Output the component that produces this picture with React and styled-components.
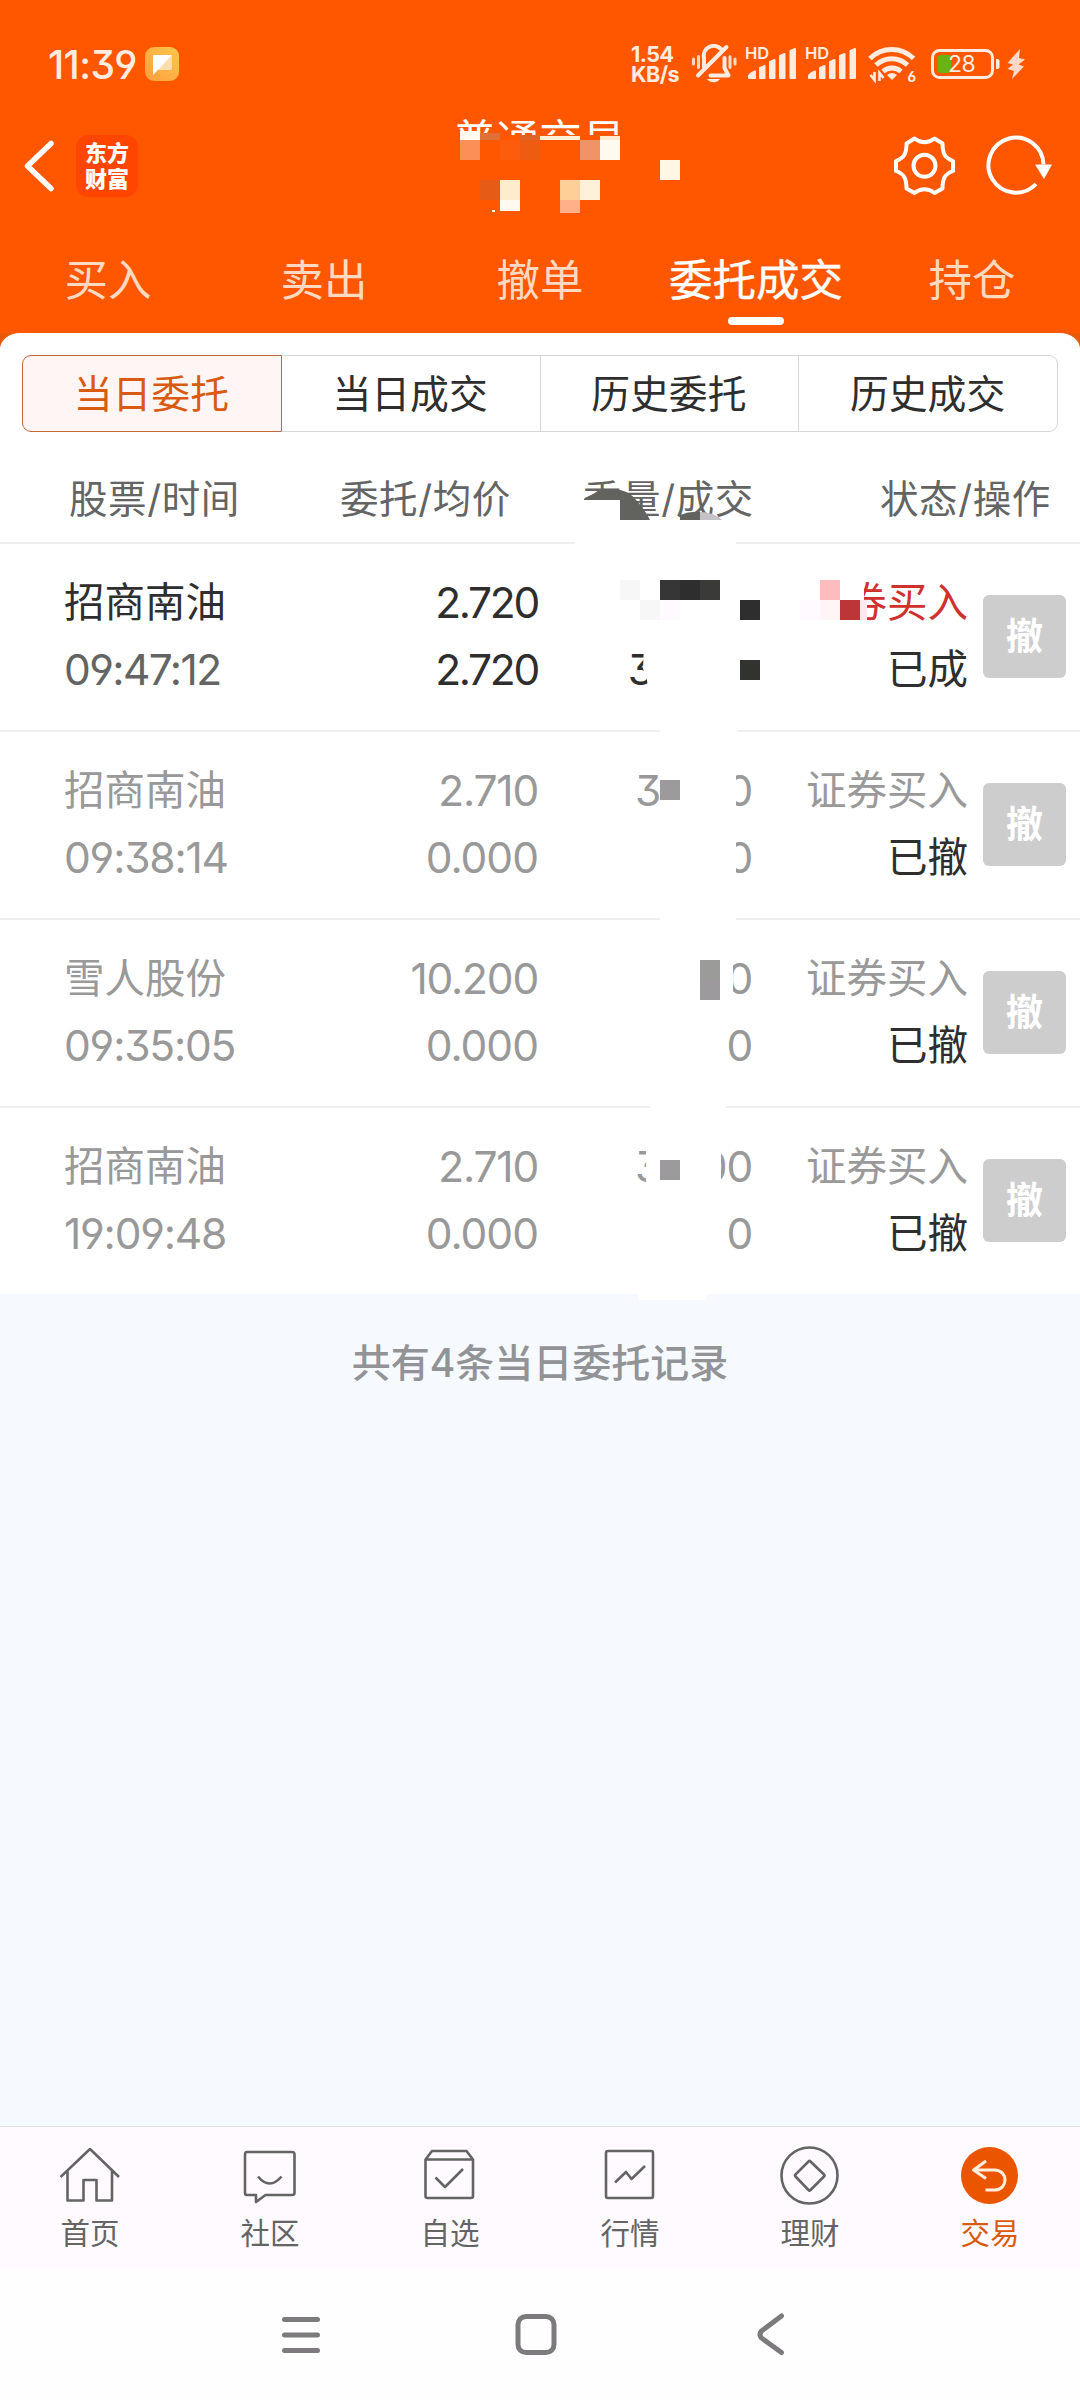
import React from 'react'
import styled, { createGlobalStyle } from 'styled-components'

const tabs = ['买入', '卖出', '撤单', '委托成交', '持仓']
const segments = ['当日委托', '当日成交', '历史委托', '历史成交']

const orders = [
    { name: '招商南油', time: '09:47:12', price: '2.720', avg: '2.720', qty: [], done: ['3'], doneRight: 99, side: '证券买入', status: '已成', filled: true },
    { name: '招商南油', time: '09:38:14', price: '2.710', avg: '0.000', qty: ['3', '0'], done: ['0'], side: '证券买入', status: '已撤' },
    { name: '雪人股份', time: '09:35:05', price: '10.200', avg: '0.000', qty: ['0'], done: ['0'], side: '证券买入', status: '已撤' },
    { name: '招商南油', time: '19:09:48', price: '2.710', avg: '0.000', qty: ['3', '00'], done: ['0'], side: '证券买入', status: '已撤' },
]

// mosaic over the account name: x, y, width, height, colour
const titleMosaic = [
    [450, 135, 180, 40, '#ff5700'],
    [460, 131, 20, 9, '#fffaf0'],
    [480, 133, 20, 7, '#e07038'],
    [520, 135, 20, 5, '#dd6424'],
    [540, 136, 40, 4, '#fff0d8'],
    [600, 136, 20, 4, '#fdebd0'],
    [460, 140, 20, 20, '#fa8f57'],
    [500, 140, 20, 20, '#fc5c0c'],
    [520, 140, 20, 20, '#ee5c12'],
    [580, 140, 20, 20, '#f09468'],
    [600, 140, 20, 20, '#fffaf0'],
    [660, 160, 20, 20, '#fff6e4'],
    [480, 180, 20, 20, '#e65c16'],
    [500, 180, 20, 20, '#ffeccc'],
    [500, 200, 20, 11, '#fffaf0'],
    [560, 180, 20, 20, '#ffcf98'],
    [580, 180, 20, 20, '#fff0da'],
    [560, 200, 20, 13, '#ffb088'],
    [492, 210, 3, 2, '#fffaf0'],
]

// mosaic over the quantities, origin at the top of the column heads
const listMosaic = [
    [575, 86, 161, 6, '#fff'],
    [660, 274, 77, 6, '#fff'],
    [660, 462, 76, 6, '#fff'],
    [650, 650, 76, 6, '#fff'],
    [724, 300, 12, 130, '#fff'],
    [724, 500, 9, 44, '#fff'],
    [646, 680, 20, 50, '#fff'],
    [690, 680, 31, 50, '#fff'],
    [800, 120, 64, 50, '#fff'],
    [620, 126, 20, 20, '#f7f7f7'],
    [640, 146, 20, 20, '#f7f7f7'],
    [660, 126, 20, 20, '#363636'],
    [680, 126, 20, 20, '#2e2e2e'],
    [700, 126, 20, 20, '#3a3b38'],
    [660, 146, 20, 20, '#fefaff'],
    [740, 146, 20, 20, '#2e2e2e'],
    [740, 206, 20, 20, '#31332f'],
    [820, 126, 20, 20, '#ffbcbe'],
    [800, 146, 20, 20, '#fefaff'],
    [820, 146, 20, 20, '#fff5f7'],
    [840, 146, 20, 20, '#bc3638'],
    [860, 146, 7, 20, '#ffe8ee'],
    [660, 326, 20, 20, '#9c9a9d'],
    [700, 506, 20, 20, '#9b9c9a'],
    [700, 526, 20, 20, '#9c9a9d'],
    [660, 706, 20, 20, '#9c9a9d'],
]

function StatusBar() {
    return (
        <Status>
            <Clock>11:39</Clock>
            <svg width="34" height="34" viewBox="0 0 34 34">
                <defs>
                    <linearGradient id="note" x1="0" y1="1" x2="1" y2="0">
                        <stop offset="0" stopColor="#ff9c40" />
                        <stop offset="1" stopColor="#ffc84a" />
                    </linearGradient>
                </defs>
                <rect width="34" height="34" rx="9" fill="url(#note)" />
                <path d="M8 8h17a2 2 0 0 1 2 2v11a2 2 0 0 1-2 2H12l-4 4z" fill="#ffdcae" />
                <path d="M9 8h18L8 28V9z" fill="#fff" />
            </svg>
            <Speed>{'1.54\nKB/s'}</Speed>
            <BellIcon />
            <Signal />
            <Signal />
            <WifiIcon />
            <Battery />
        </Status>
    )
}

function BellIcon() {
    return (
        <Glyph width="46" height="40" viewBox="690 45 46 40" $left={11}>
            <g fill="none" stroke="#ffece0" strokeWidth="4" strokeLinecap="round" strokeLinejoin="round">
                <path d="M703 68V59a10 10 0 0 1 17-9" />
                <path d="M723.500 59v10l4 7.500h-18" />
                <path d="M697 76.500L725.500 48" />
            </g>
            <g stroke="#ffd9c2" strokeWidth="3" strokeLinecap="round">
                <path d="M692.500 60v5M697.500 57.500v11M729 57.500v11M734 60v5" />
            </g>
            <path d="M706 80h13a7 5 0 0 1-13 0z" fill="#ffece0" />
        </Glyph>
    )
}

function Signal() {
    return (
        <SignalBox>
            <Hd>HD</Hd>
            <svg width="52" height="40" viewBox="746 45 52 40">
                <path
                    d="M750 79v-2.500q2-3 6-4V79zM761 79V69l4.500-2V79zM771 79V63l4.500-2V79zM781 79V57l4.500-2V79zM791.500 79V52l4.500-2V79z"
                    fill="#ffece0"
                    stroke="#ffece0"
                    strokeWidth="2"
                    strokeLinejoin="round"
                />
            </svg>
        </SignalBox>
    )
}

function WifiIcon() {
    return (
        <WifiBox>
            <svg width="50" height="40" viewBox="868 45 50 40">
                <g fill="none" stroke="#ffece0" strokeWidth="5">
                    <path d="M871 59.500a31 31 0 0 1 43.500 0" />
                    <path d="M877 66a23 23 0 0 1 31.500 0" />
                    <path d="M884 72.500a13.500 13.500 0 0 1 18 0" />
                </g>
                <path d="M888 76q5-4 10 0l-5 5z" fill="#ffece0" />
                <g fill="none" stroke="#ffece0" strokeWidth="2.600">
                    <path d="M875.500 73v8l-4-5M880.500 82v-8l4 5" />
                </g>
            </svg>
            <Six>6</Six>
        </WifiBox>
    )
}

function Battery() {
    return (
        <BatteryBox>
            <svg width="96" height="40" viewBox="930 44 96 40">
                <rect x="932.500" y="50.500" width="60" height="27" rx="7" fill="none" stroke="#ffece0" strokeWidth="3" />
                <rect x="938" y="55" width="13" height="18" rx="3" fill="#66b512" />
                <path d="M996 59h1.500q2 0 2 2v6q0 2-2 2H996z" fill="#ffece0" />
                <path d="M1020 49L1007.500 63L1013 64.500L1007.500 69L1014 71L1012 79L1024 66.500L1018.500 64.500L1025 59.500L1019 58Z" fill="#ffd9c8" />
            </svg>
            <Percent>28</Percent>
        </BatteryBox>
    )
}

function TitleBar() {
    return (
        <TitleRow>
            <svg width="30" height="52" viewBox="0 0 30 52">
                <path d="M27 3.500L3.500 26L27 48.500" fill="none" stroke="#fff" strokeWidth="5.500" strokeLinecap="round" strokeLinejoin="round" />
            </svg>
            <Brand>
                <span>东方</span>
                <span>财富</span>
            </Brand>
            <Title>普通交易</Title>
            <svg width="64" height="62" viewBox="892 134 64 62">
                <g fill="none" stroke="#fff" strokeWidth="4" strokeLinejoin="round">
                    <path d="M914.500 137.500Q924.500 145 934.500 137.500L942.500 142.500C942.500 153 945 157 953 160V170C945 173 942.500 177 942.500 187.500L934.500 192Q924.500 184.500 914.500 192L906.500 187.500C906.500 177 904 173 896 170V160C904 157 906.500 153 906.500 142.500Z" />
                    <circle cx="924.500" cy="164.800" r="11" />
                </g>
            </svg>
            <Glyph width="68" height="62" viewBox="985 134 68 62" $left={29}>
                <path d="M1043.500 163.500A27.500 27.500 0 1 0 1036 183" fill="none" stroke="#fff" strokeWidth="4" />
                <path d="M1035 163.500h17l-8 14.500z" fill="#fff" />
            </Glyph>
        </TitleRow>
    )
}

function Order({ order }) {
    const tone = order.filled ? '#2e2e2e' : '#999'
    return (
        <OrderRow>
            <Cell $width={330} $color={tone}>
                <span>{order.name}</span>
                <Digits $color={order.filled ? '#636463' : '#999'} $tight={order.filled ? -1.6 : -1.2}>{order.time}</Digits>
            </Cell>
            <Cell $width={144} $color={tone} $end>
                <Digits $tight={order.filled ? -2.3 : -1.2}>{order.price}</Digits>
                <Digits $tight={order.filled ? -2.3 : -1}>{order.avg}</Digits>
            </Cell>
            <Cell $width={214} $color={tone} $end>
                <Masked>{order.qty.map((part) => <Digits key={part}>{part}</Digits>)}</Masked>
                <Masked $right={order.doneRight}>{order.done.map((part) => <Digits key={part}>{part}</Digits>)}</Masked>
            </Cell>
            <Cell $width={216} $color="#2e2e2e" $end>
                <Side $filled={order.filled}>{order.side}</Side>
                <span>{order.status}</span>
            </Cell>
            <CancelButton>撤</CancelButton>
        </OrderRow>
    )
}

const navItems = [
    {
        label: '首页',
        icon: <path d="M.5 31L30 3L59 31M7.500 25V54.500H23.500V34H36.500V54.500H52V25" />,
    },
    {
        label: '社区',
        icon: <path d="M7 6H52Q54.500 6 54.500 8.500V47Q54.500 49 52 49H25.500L16 56V49H7Q5 49 5 47V8.500Q5 6 7 6ZM18 30.500Q29.500 44.500 41.500 30.500" />,
    },
    {
        label: '自选',
        icon: <path d="M5.500 13.500L12 5H46.500L53 13.500V50Q53 52 51 52H7.500Q5.500 52 5.500 50ZM5.500 13.500H53M15.500 31.500L25 41L43 23" />,
    },
    {
        label: '行情',
        icon: <path d="M8 5H51Q53 5 53 7V50Q53 52 51 52H8Q6 52 6 50V7Q6 5 8 5ZM15 36.500L26 26L31.500 33L45 20" />,
    },
    {
        label: '理财',
        icon: (
            <>
                <circle cx="29.500" cy="29.500" r="28" />
                <path d="M28.500 15.500Q29.500 14.500 30.500 15.500L44 28.500Q45 29.500 44 30.500L30.500 44Q29.500 45 28.500 44L15.500 30.500Q14.500 29.500 15.500 28.500Z" />
            </>
        ),
    },
    {
        label: '交易',
        active: true,
        icon: (
            <>
                <circle cx="29.500" cy="29.500" r="28.500" fill="#ec5500" stroke="none" />
                <path d="M26 15L13.500 24L26 32.500M14 24H34.500C48.500 24 48.500 44 34.500 44H25.500" stroke="#ffeedd" strokeWidth="3" />
            </>
        ),
    },
]

export default function App() {
    return (
        <Page>
            <GlobalStyle />
            <Header>
                <StatusBar />
                <TitleBar />
                <Tabs>
                    {tabs.map((tab, i) => (
                        <Tab key={tab} $active={i === 3}>{tab}</Tab>
                    ))}
                </Tabs>
                <Overlay width="1080" height="333" viewBox="0 0 1080 333">
                    {titleMosaic.map(([x, y, w, h, fill]) => (
                        <rect key={`${x}-${y}`} x={x} y={y} width={w} height={h} fill={fill} />
                    ))}
                </Overlay>
            </Header>
            <PanelBack>
                <Panel>
                    <Segments>
                        {segments.map((name, i) => (
                            <Segment key={name} $active={i === 0}>{name}</Segment>
                        ))}
                    </Segments>
                </Panel>
            </PanelBack>
            <List>
                <ColumnHeads>
                    <span>股票/时间</span>
                    <span>委托/均价</span>
                    <span>委量/成交</span>
                    <span>状态/操作</span>
                </ColumnHeads>
                {orders.map((order) => (
                    <Order key={order.time} order={order} />
                ))}
                <Overlay width="1080" height="850" viewBox="0 0 1080 850">
                    {listMosaic.map(([x, y, w, h, fill]) => (
                        <rect key={`${x}-${y}`} x={x} y={y} width={w} height={h} fill={fill} />
                    ))}
                    <path d="M644 190H662V240H648Q648 222 643 215Z" fill="#fff" />
                    <path d="M580 46H620V70H580Z" fill="#fff" />
                    <path d="M584 45Q598 36 612 35Q628 35 637 47Q645 56 650 66H620V46H584Z" fill="#62635f" />
                    <path d="M680 66V61Q690 57 700 58V66Z" fill="#62635f" />
                    <path d="M700 58Q714 58 722 66H700Z" fill="#c5c2c7" />
                    <path d="M637 839H709L706 846H639Z" fill="#fff" />
                </Overlay>
            </List>
            <Summary>共有4条当日委托记录</Summary>
            <BottomNav>
                {navItems.map((item) => (
                    <NavItem key={item.label} $active={item.active}>
                        <svg width="60" height="60" viewBox="0 0 60 60" fill="none" stroke="#636463" strokeWidth="2.600" strokeLinejoin="round">
                            {item.icon}
                        </svg>
                        {item.label}
                    </NavItem>
                ))}
            </BottomNav>
            <SystemNav>
                <svg width="40" height="44" viewBox="0 0 40 44">
                    <path d="M3.500 6.500H36.500M3.500 22H36.500M3.500 37.500H36.500" stroke="#7c7a7c" strokeWidth="5" strokeLinecap="round" />
                </svg>
                <svg width="44" height="44" viewBox="0 0 44 44">
                    <rect x="4" y="3.500" width="36" height="36" rx="8" fill="none" stroke="#7c7a7c" strokeWidth="5" />
                </svg>
                <svg width="40" height="44" viewBox="0 0 40 44">
                    <path d="M31.500 3L11.500 18Q8.500 21.500 11.500 25L31.500 39.500" fill="none" stroke="#7c7a7c" strokeWidth="5" strokeLinecap="round" />
                </svg>
            </SystemNav>
        </Page>
    )
}


const GlobalStyle = createGlobalStyle`
body{
    margin: 0;
}

*{
    box-sizing: border-box;
}

svg{
    display: block;
    flex: none;
}
`

const Page = styled.div`
width: 1080px;
height: 2400px;
display: flex;
flex-direction: column;
background-color: #f6faff;
font-family: Inter, "Noto Sans CJK SC", sans-serif;
font-feature-settings: "cv03", "cv04", "cv09";
white-space: nowrap;
overflow: hidden;
`

const Header = styled.div`
position: relative;
height: 333px;
background-color: #ff5700;
color: white;
`

const Overlay = styled.svg`
position: absolute;
top: 0;
left: 0;
pointer-events: none;
`

const Glyph = styled.svg`
margin-left: ${(props) => props.$left}px;
`

const Status = styled.div`
height: 128px;
padding: 0 54px 0 48px;
display: flex;
align-items: center;
color: #ffece0;
`

const Clock = styled.div`
width: 97px;
font-size: 39px;
font-weight: 500;
letter-spacing: -0.6px;
`

const Speed = styled.div`
margin-left: 452px;
width: 49px;
font-size: 21.5px;
font-weight: 700;
line-height: 20px;
letter-spacing: -0.5px;
white-space: pre;
`

const SignalBox = styled.div`
position: relative;
margin-left: 8px;
`

const Hd = styled.div`
position: absolute;
top: 1px;
left: 0;
font-size: 16.5px;
font-weight: 600;
line-height: 16px;
`

const WifiBox = styled.div`
position: relative;
margin-left: 10px;
`

const Six = styled.div`
position: absolute;
right: 1px;
bottom: -1px;
font-size: 14px;
font-weight: 700;
line-height: 16px;
`

const BatteryBox = styled.div`
position: relative;
margin-left: 13px;
`

const Percent = styled.div`
position: absolute;
top: 8px;
left: 18px;
font-size: 23px;
line-height: 24px;
letter-spacing: -0.5px;
`

const TitleRow = styled.div`
height: 76px;
padding: 0 27px 0 24px;
display: flex;
align-items: center;
`

const Brand = styled.div`
width: 62px;
height: 62px;
margin-left: 22px;
border-radius: 12px;
background-color: #ff4500;
display: flex;
flex-direction: column;
align-items: center;
justify-content: center;
font-size: 22px;
font-weight: 900;
line-height: 26px;
`

const Title = styled.div`
flex: 1;
padding-left: 315px;
font-size: 43px;
line-height: 52px;
margin-top: -52px;
`

const Tabs = styled.div`
height: 129px;
display: flex;
`

const Tab = styled.div`
flex: 1;
display: flex;
flex-direction: column;
align-items: center;
padding-top: 50px;
font-size: 43.5px;
line-height: 52px;
-webkit-text-stroke: ${(props) => (props.$active ? '0.4px' : '0')};
color: ${(props) => (props.$active ? '#fff' : '#ffd9c0')};

&:after{
    content: '';
    width: 56px;
    height: 8px;
    margin-top: 11px;
    border-radius: 4px;
    background-color: ${(props) => (props.$active ? '#fff' : 'transparent')};
}
`

const PanelBack = styled.div`
background-color: #e85a08;
`

const Panel = styled.div`
height: 121px;
padding: 22px 22px 0;
border-radius: 20px 20px 0 0 / 16px 16px 0 0;
background-color: white;
`

const Segments = styled.div`
height: 77px;
display: flex;
`

const Segment = styled.div`
flex: 1;
display: flex;
align-items: center;
justify-content: center;
padding: 0 1px 6px 0;
font-size: 38.8px;
border: 1px solid ${(props) => (props.$active ? '#c0683c' : '#d4d6d8')};
border-left-width: ${(props) => (props.$active ? '1px' : '0')};
background-color: ${(props) => (props.$active ? '#fff5f5' : '#fff')};
color: ${(props) => (props.$active ? '#d95a10' : '#2e2e2e')};

&:first-child{
    border-radius: 9px 0 0 9px;
}

&:last-child{
    border-radius: 0 9px 9px 0;
}
`

const List = styled.div`
position: relative;
height: 840px;
background-color: white;
`

const ColumnHeads = styled.div`
height: 88px;
padding: 0 29px 5px 69px;
display: grid;
grid-template-columns: 271px 243px 297px 171px;
align-items: center;
font-size: 38.5px;
letter-spacing: 0.6px;
color: #636463;
`

const OrderRow = styled.div`
height: 188px;
padding: 0 14px 0 64px;
display: flex;
align-items: flex-start;
border-top: 2px solid #f0f0f0;
`

const Cell = styled.div`
width: ${(props) => props.$width}px;
padding-top: 25px;
display: flex;
flex-direction: column;
align-items: ${(props) => (props.$end ? 'flex-end' : 'flex-start')};
font-size: 40.5px;
line-height: 67px;
color: ${(props) => props.$color};
`

const Digits = styled.span`
font-size: 42.5px;
letter-spacing: ${(props) => props.$tight || -1.2}px;
color: ${(props) => props.$color || 'inherit'};
`

const Masked = styled.div`
width: 117px;
height: 67px;
padding-right: ${(props) => props.$right || 0}px;
display: flex;
justify-content: flex-end;

span:first-child:not(:last-child){
    margin-right: auto;
}
`

const Side = styled.span`
color: ${(props) => (props.$filled ? '#d0302e' : '#999')};
`

const CancelButton = styled.div`
width: 83px;
height: 83px;
margin: 51px 0 0 15px;
border-radius: 6px;
background-color: #cdcdcd;
color: white;
font-size: 37px;
font-weight: 700;
line-height: 83px;
text-align: center;
`

const Summary = styled.div`
flex: 1;
padding-top: 40px;
text-align: center;
font-size: 39px;
font-weight: 500;
line-height: 58px;
color: #929396;
`

const BottomNav = styled.div`
height: 144px;
padding-top: 19px;
display: flex;
border-top: 1px solid #dfe1e5;
background-color: #fefaff;
`

const NavItem = styled.div`
flex: 1;
display: flex;
flex-direction: column;
align-items: center;
gap: 9px;
font-size: 29.5px;
line-height: 36px;
color: ${(props) => (props.$active ? '#d95a10' : '#636463')};
`

const SystemNav = styled.div`
height: 130px;
padding: 0 290px 0 281px;
display: flex;
align-items: center;
justify-content: space-between;
background-color: #fefefe;
`
